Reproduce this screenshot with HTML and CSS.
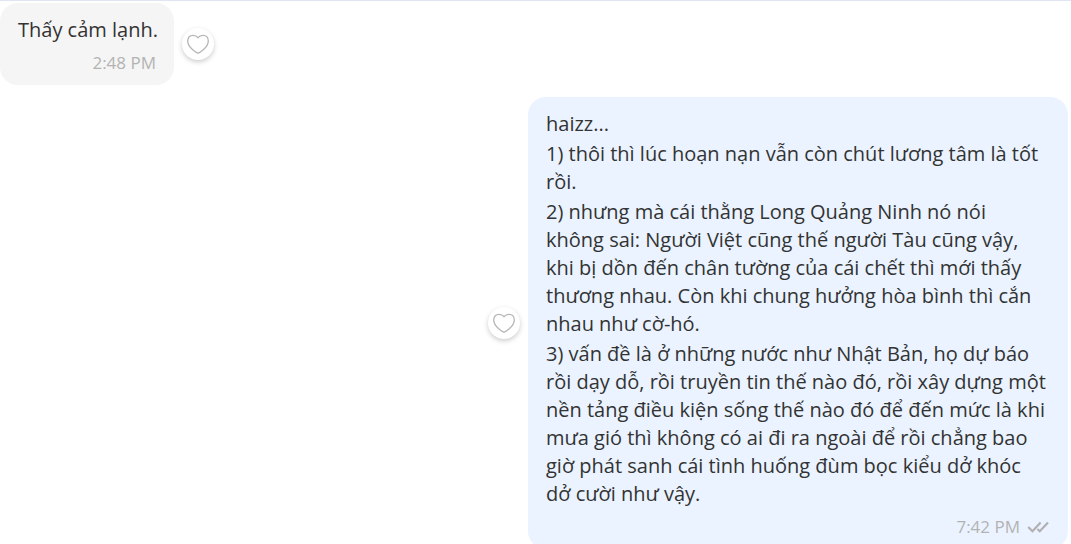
FILE: index.html
```html
<!DOCTYPE html>
<html lang="vi">
<head>
<meta charset="utf-8">
<meta name="viewport" content="width=device-width, initial-scale=1">
<title>Chat</title>
<link rel="stylesheet" href="styles.css">
</head>
<body>
<main class="chat">
  <article class="message">
    <div class="bubble">
      <div class="text"><p>Thấy cảm lạnh.</p></div>
      <div class="meta"><time>2:48 PM</time></div>
    </div>
    <button class="react" type="button" aria-label="Thích">
      <svg class="heart" viewBox="0 0 24 22"><path d="M12 20C11 20 1.7 14.6 1.7 8C1.7 4.4 4 2.3 6.9 2.3C9.2 2.3 11 3.2 12 4.6C13 3.2 14.8 2.3 17.1 2.3C20 2.3 22.3 4.4 22.3 8C22.3 14.6 13 20 12 20Z"/></svg>
    </button>
  </article>
  <article class="message mine">
    <button class="react" type="button" aria-label="Thích">
      <svg class="heart" viewBox="0 0 24 22"><path d="M12 20C11 20 1.7 14.6 1.7 8C1.7 4.4 4 2.3 6.9 2.3C9.2 2.3 11 3.2 12 4.6C13 3.2 14.8 2.3 17.1 2.3C20 2.3 22.3 4.4 22.3 8C22.3 14.6 13 20 12 20Z"/></svg>
    </button>
    <div class="bubble">
      <div class="text">
        <p>haizz...</p>
        <p>1) thôi thì lúc hoạn nạn vẫn còn chút lương tâm là tốt<br>rồi.</p>
        <p>2) nhưng mà cái thằng Long Quảng Ninh nó nói<br>không sai: Người Việt cũng thế người Tàu cũng vậy,<br>khi bị dồn đến chân tường của cái chết thì mới thấy<br>thương nhau. Còn khi chung hưởng hòa bình thì cắn<br>nhau như cờ-hó.</p>
        <p>3) vấn đề là ở những nước như Nhật Bản, họ dự báo<br>rồi dạy dỗ, rồi truyền tin thế nào đó, rồi xây dựng một<br>nền tảng điều kiện sống thế nào đó để đến mức là khi<br>mưa gió thì không có ai đi ra ngoài để rồi chẳng bao<br>giờ phát sanh cái tình huống đùm bọc kiểu dở khóc<br>dở cười như vậy.</p>
      </div>
      <div class="meta">
        <time>7:42 PM</time>
        <svg class="ticks" viewBox="0 0 24 14" role="img" aria-label="Đã nhận"><path d="M2.2 7L6.5 11.2L14.6 2.6M11.4 9L13.8 11.2L22 2.6"/></svg>
      </div>
    </div>
  </article>
</main>
</body>
</html>
```
FILE: styles.css
```css
* { box-sizing: border-box; }

body {
  margin: 0;
  overflow: hidden;
  background: #fff;
  color: #333;
  font: 20px/28px "Open Sans", "Noto Sans", sans-serif;
}

.chat {
  display: flex;
  flex-direction: column;
  gap: 12px;
  border-top: 1px solid #e1e4f2;
  padding: 2px 3px 0 0;
}

.message {
  display: flex;
  align-items: center;
  gap: 8px;
}

.mine { justify-content: flex-end; }

.bubble {
  padding: 13px 16px 10px 18px;
  border-radius: 18px;
  background: #f5f5f5;
}

.mine .bubble {
  width: 540px;
  background: #eaf3ff;
}

.text {
  display: flex;
  flex-direction: column;
  gap: 2px;
}

.text p { margin: 0; }

.meta {
  display: flex;
  justify-content: flex-end;
  align-items: center;
  gap: 6px;
  margin-top: 7px;
  padding-right: 2px;
  color: #b3b3b3;
  font-size: 17px;
  line-height: 24px;
}

.react {
  display: flex;
  justify-content: center;
  align-items: center;
  flex: none;
  width: 32px;
  height: 32px;
  padding: 0;
  border: 0;
  border-radius: 50%;
  background: #fff;
  box-shadow: 0 2px 5px rgba(0, 0, 0, .2);
}

.heart {
  width: 24px;
  height: 22px;
  fill: none;
  stroke: #b5b5b5;
  stroke-width: 1.3;
}

.ticks {
  width: 24px;
  height: 14px;
  fill: none;
  stroke: #b0b0b0;
  stroke-width: 2.2;
}
```
